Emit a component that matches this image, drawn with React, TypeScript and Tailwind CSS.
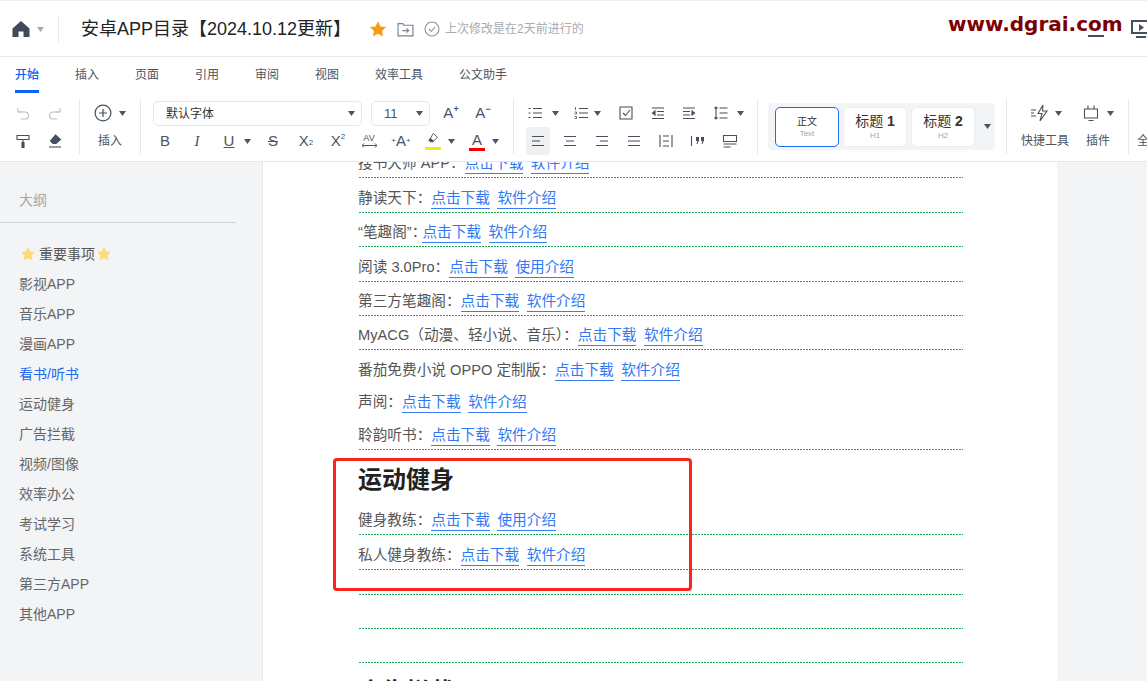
import React from "react";

const cjk = "font-['Liberation_Sans','Noto_Sans_CJK_SC',sans-serif]";
const dotted = "bg-[linear-gradient(90deg,#1aa85a_66%,transparent_66%)] bg-[length:3px_1px] bg-bottom bg-repeat-x";

const Arrow = ({ className = "" }: { className?: string }) => (
  <svg width="7" height="5" viewBox="0 0 7 5" className={`shrink-0 ${className}`}>
    <path d="M0 0h7L3.500 5z" fill="#4b5563" />
  </svg>
);

const Ico = ({ children, size = 16, vb = 16, color = "#454f5e" }: { children: React.ReactNode; size?: number; vb?: number; color?: string }) => (
  <svg width={size} height={size} viewBox={`0 0 ${vb} ${vb}`} fill="none" stroke={color} strokeWidth="1.1" className="shrink-0">
    {children}
  </svg>
);

const Cell = ({ w, children, className = "" }: { w: string; children?: React.ReactNode; className?: string }) => (
  <div className={`flex h-[28px] shrink-0 items-center justify-center ${w} ${className}`}>{children}</div>
);

const Lines = ({ kind }: { kind: "l" | "c" | "r" | "j" }) => {
  const d = {
    l: "M2 3.500h12M2 8h8M2 12.500h12",
    c: "M2 3.500h12M4 8h8M2 12.500h12",
    r: "M2 3.500h12M6 8h8M2 12.500h12",
    j: "M2 3.500h12M2 8h12M2 12.500h12",
  }[kind];
  return (
    <Ico>
      <path d={d} />
    </Ico>
  );
};

const tabs = ["开始", "插入", "页面", "引用", "审阅", "视图", "效率工具", "公文助手"];

const outline = ["影视APP", "音乐APP", "漫画APP", "看书/听书", "运动健身", "广告拦截", "视频/图像", "效率办公", "考试学习", "系统工具", "第三方APP", "其他APP"];

const Star = () => (
  <svg width="14" height="14" viewBox="0 0 24 24" fill="#fbdc7c" stroke="#fbdc7c" strokeWidth="3" strokeLinejoin="round">
    <path d="M12 3l2.800 5.900 6.400.8-4.700 4.400 1.200 6.400L12 17.400l-5.700 3.100 1.200-6.400-4.700-4.400 6.400-.8z" />
  </svg>
);

function Header() {
  return (
    <div className="flex h-[57px] items-center border-b border-t border-[#e5e7eb] border-t-[#eef0f6] pt-[1px]">
      <div className="ml-[12px] flex w-[46px] items-center">
        <svg width="18" height="18" viewBox="0 0 18 18">
          <path d="M9 1L17.500 8.500V17H11.500V11.500H6.500V17H0.500V8.500z" fill="#414a58" />
        </svg>
        <Arrow className="ml-[7px] opacity-50" />
      </div>
      <div className="h-[26px] w-px bg-[#e5e7eb]" />
      <div className="ml-[22px] w-[288px] text-[18px] whitespace-nowrap text-[#222]">安卓APP目录【2024.10.12更新】</div>
      <svg width="18" height="18" viewBox="0 0 24 24">
        <path d="M12 1.500l3.300 7 7.500.9-5.500 5.200 1.400 7.500L12 18.400l-6.700 3.700 1.400-7.500L1.200 9.400l7.500-.9z" fill="#fa9c0f" />
      </svg>
      <div className="ml-[10px]">
        <Ico size={17} color="#7a8290">
          <path d="M1 2.500h4.500l1 1.500H15v10H1z" />
          <path d="M5 9h6M9 7l2 2-2 2" />
        </Ico>
      </div>
      <div className="ml-[10px]">
        <Ico size={16} color="#8a919c">
          <circle cx="8" cy="8" r="7" />
          <path d="M5 8l2.300 2.300L11 6" />
        </Ico>
      </div>
      <div className="ml-[5px] text-[12px] whitespace-nowrap text-[#a7abb2]">上次修改是在2天前进行的</div>
      <div className="ml-auto flex items-center">
        <div className="mr-[27px] h-[15px] w-[16px] border-b-2 border-[#454f5e]" />
        <div className="-mr-[4px] flex flex-col items-center">
          <div className="flex h-[14px] w-[20px] items-center justify-center border-2 border-[#454f5e]">
            <svg width="5" height="7" viewBox="0 0 5 7"><path d="M0 0l5 3.500L0 7z" fill="#454f5e" /></svg>
          </div>
          <div className="mt-[2px] h-[2px] w-[10px] bg-[#454f5e]" />
        </div>
      </div>
    </div>
  );
}

function Tabs() {
  return (
    <div className="flex h-[39px] items-start gap-[36px] pl-[15px] pt-[11px] text-[12px] text-[#4b5563]">
      {tabs.map((t, i) => (
        <div key={t} className={i === 0 ? "h-[25px] border-b-[3px] border-[#0b62f6] leading-[15px] font-medium text-[#0b62f6]" : "leading-[15px]"}>
          {t}
        </div>
      ))}
    </div>
  );
}

function Toolbar() {
  const textCell = "text-[15px] text-[#4b5563]";
  return (
    <div className="flex h-[66px] border-b border-[#e5e7eb] pb-[7px] pt-[3px]">
      {/* undo, format painter */}
      <div className="w-[80px] shrink-0 border-r border-[#e5e7eb] pl-[7px]">
        <div className="flex">
          <Cell w="w-[32px]">
            <Ico color="#b9bdc4"><path d="M3 3v4h4" /><path d="M3.500 7H10a3.500 3.500 0 0 1 0 7H6" /></Ico>
          </Cell>
          <Cell w="w-[32px]">
            <Ico color="#b9bdc4"><path d="M13 3v4H9" /><path d="M12.500 7H6a3.500 3.500 0 0 0 0 7h4" /></Ico>
          </Cell>
        </div>
        <div className="flex">
          <Cell w="w-[32px]">
            <Ico><path d="M2 2.500h12v4H2z" /><path d="M8 6.500v3" /><path d="M7 9.500h2v5H7z" fill="#454f5e" /></Ico>
          </Cell>
          <Cell w="w-[32px]">
            <Ico><path d="M8.500 2L13.500 6.500 9 10.500H6L3.500 8z" fill="#454f5e" /><path d="M2 14h12" /></Ico>
          </Cell>
        </div>
      </div>
      {/* insert */}
      <div className="w-[61px] shrink-0 border-r border-[#e5e7eb]">
        <Cell w="w-full" className="gap-[7px]">
          <Ico size={18}><circle cx="8" cy="8" r="7" /><path d="M8 4.500v7M4.500 8h7" /></Ico>
          <Arrow />
        </Cell>
        <Cell w="w-full" className="text-[12px] text-[#4b5563]">插入</Cell>
      </div>
      {/* font */}
      <div className="w-[373px] shrink-0 border-r border-[#e5e7eb]">
        <div className="flex h-[28px] items-center">
          <div className="ml-[12px] flex h-[25px] w-[209px] shrink-0 items-center justify-between rounded-[5px] border border-[#e5e7eb] pl-[12px] pr-[6px] pt-[1px] text-[12px] text-[#333]">
            默认字体
            <Arrow />
          </div>
          <div className="ml-[9px] flex h-[25px] w-[59px] shrink-0 items-center justify-between rounded-[5px] border border-[#e5e7eb] pl-[12px] pr-[6px] pt-[1px] text-[13px] text-[#4b5563]">
            11
            <Arrow />
          </div>
          <Cell w="w-[34px]" className={`${textCell} ml-[4px]`}>A<sup className="text-[9px] font-bold">+</sup></Cell>
          <Cell w="w-[30px]" className={textCell}>A<sup className="text-[9px] font-bold">−</sup></Cell>
        </div>
        <div className="flex pl-[8px]">
          <Cell w="w-[32px]" className={textCell}>B</Cell>
          <Cell w="w-[32px]" className={textCell}><i className="font-['Liberation_Serif',serif]">I</i></Cell>
          <Cell w="w-[32px]" className={textCell}><u>U</u></Cell>
          <Cell w="w-[4px]"><Arrow /></Cell>
          <Cell w="w-[34px]" className={`${textCell} ml-[7px]`}><s>S</s></Cell>
          <Cell w="w-[32px]" className={textCell}>X<sub className="text-[8px]">2</sub></Cell>
          <Cell w="w-[32px]" className={textCell}>X<sup className="text-[8px]">2</sup></Cell>
          <Cell w="w-[30px]">
            <div className="flex flex-col items-center text-[9px] leading-[9px] font-medium text-[#4b5563]">
              AV
              <svg width="15" height="5" viewBox="0 0 15 5" fill="none" stroke="#4b5563"><path d="M0 2.500h15M2 .5L0 2.500l2 2M13 .5l2 2-2 2" /></svg>
            </div>
          </Cell>
          <Cell w="w-[34px]" className={textCell}><span className="text-[8px]">+</span>A<span className="text-[8px]">+</span></Cell>
          <Cell w="w-[30px]" className="flex-col">
            <Ico size={14}><path d="M8.500 1.500L13 6l-5 5H5L3.500 9.500z" /><path d="M3.500 9.500L5.500 7.500l3 3-.5.5H5z" fill="#454f5e" /></Ico>
            <div className="mt-[1px] h-[3px] w-[16px] bg-[#f5ea00]" />
          </Cell>
          <Cell w="w-[6px]"><Arrow /></Cell>
          <Cell w="w-[34px]" className="ml-[6px] flex-col">
            <span className="text-[15px] leading-[15px] text-[#4b5563]">A</span>
            <div className="mt-[1px] h-[3px] w-[16px] bg-[#f50000]" />
          </Cell>
          <Cell w="w-[2px]"><Arrow /></Cell>
        </div>
      </div>
      {/* paragraph */}
      <div className="w-[244px] shrink-0 border-r border-[#e5e7eb]">
        <div className="flex pl-[8px]">
          <Cell w="w-[26px]">
            <Ico><path d="M6 3.500h9M6 8h9M6 12.500h9" /><path d="M1.500 3.500h2M1.500 8h2M1.500 12.500h2" /></Ico>
          </Cell>
          <Cell w="w-[14px]"><Arrow /></Cell>
          <Cell w="w-[26px]" className="ml-[6px]">
            <Ico><path d="M6 3.500h9M6 8h9M6 12.500h9" /><path d="M2.500 2v3M1.500 7h2v2h-2M1.500 11.500h2v2h-2" strokeWidth="0.8" /></Ico>
          </Cell>
          <Cell w="w-[6px]"><Arrow /></Cell>
          <Cell w="w-[32px]" className="ml-[10px]">
            <Ico><path d="M2 2h12v12H2z" /><path d="M5 8l2.500 2.500L12 5" /></Ico>
          </Cell>
          <Cell w="w-[32px]">
            <Ico><path d="M2 3h12M7 6.500h7M7 10h7M2 13.500h12" /><path d="M5 6L2.500 8 5 10z" fill="#454f5e" /></Ico>
          </Cell>
          <Cell w="w-[30px]">
            <Ico><path d="M2 3h12M2 6.500h7M2 10h7M2 13.500h12" /><path d="M11 6l2.500 2L11 10z" fill="#454f5e" /></Ico>
          </Cell>
          <Cell w="w-[34px]">
            <Ico><path d="M6.500 3h8M6.500 8h8M6.500 13h8M3 2v12M1.500 3.500L3 2l1.500 1.500M1.500 12.500L3 14l1.500-1.500" /></Ico>
          </Cell>
          <Cell w="w-[4px]"><Arrow /></Cell>
        </div>
        <div className="flex gap-[8px] pl-[12px]">
          <Cell w="w-[24px]" className="rounded-[3px] bg-[#eff0f2]"><Lines kind="l" /></Cell>
          <Cell w="w-[24px]"><Lines kind="c" /></Cell>
          <Cell w="w-[24px]"><Lines kind="r" /></Cell>
          <Cell w="w-[24px]"><Lines kind="j" /></Cell>
          <Cell w="w-[24px]">
            <Ico><path d="M2 2v12M14 2v12M5 3h6M5 8h6M5 13h6" /></Ico>
          </Cell>
          <Cell w="w-[24px]">
            <Ico><path d="M1.500 3v10" /><path d="M6 4h3v3.500L7.500 11H6.500L7.500 8H6zM11 4h3v3.500L12.500 11h-1l1-3H11z" fill="#454f5e" stroke="none" /></Ico>
          </Cell>
          <Cell w="w-[24px]">
            <Ico><path d="M1.500 2.500h13v6h-13zM1.500 11h13M1.500 14h7" /></Ico>
          </Cell>
        </div>
      </div>
      {/* styles */}
      <div className="w-[249px] shrink-0 border-r border-[#e5e7eb] pl-[10px]">
        <div className="mt-[4px] flex h-[47px] w-[227px] items-center gap-[4px] rounded-[4px] bg-[#f3f4f6] pl-[7px]">
          <div className="flex h-[40px] w-[64px] flex-col items-center justify-center rounded-[5px] border border-[#1a6cf5] bg-white text-[10px] leading-[13px] text-[#333]">
            正文
            <span className="text-[8px] leading-[11px] text-[#a0a4ab]">Text</span>
          </div>
          <div className="flex h-[40px] w-[64px] flex-col items-center justify-center rounded-[5px] border border-[#eceef1] bg-white text-[14px] leading-[17px] text-[#333]">
            <span>标题 <b>1</b></span>
            <span className="text-[8px] leading-[11px] text-[#a0a4ab]">H1</span>
          </div>
          <div className="flex h-[40px] w-[64px] flex-col items-center justify-center rounded-[5px] border border-[#eceef1] bg-white text-[14px] leading-[17px] text-[#333]">
            <span>标题 <b>2</b></span>
            <span className="text-[8px] leading-[11px] text-[#a0a4ab]">H2</span>
          </div>
          <Arrow className="ml-[5px]" />
        </div>
      </div>
      {/* tools */}
      <div className="w-[122px] shrink-0 border-r border-[#e5e7eb]">
        <div className="flex pl-[22px]">
          <Cell w="w-[22px]">
            <Ico size={20} vb={20}><path d="M1 7h5M1 10h3M1 13h5" /><path d="M13 2L8 10.500h4L10 18l7-10h-4.500z" /></Ico>
          </Cell>
          <Cell w="w-[14px]"><Arrow /></Cell>
          <Cell w="w-[20px]" className="ml-[16px]">
            <Ico size={18} vb={18}><path d="M2.500 5h13v9h-13zM6 5V1.500M12 5V1.500M6.500 16.500h5" /></Ico>
          </Cell>
          <Cell w="w-[14px]" className="ml-[2px]"><Arrow /></Cell>
        </div>
        <div className="flex h-[28px] items-center pl-[14px] text-[12px] text-[#4b5563]">
          <span>快捷工具</span>
          <span className="ml-[17px]">插件</span>
        </div>
      </div>
      <div className="shrink-0">
        <div className="h-[28px]" />
        <div className="flex h-[28px] items-center pl-[8px] text-[12px] text-[#4b5563]">全</div>
      </div>
    </div>
  );
}

function Sidebar() {
  return (
    <div className="h-full w-[263px] shrink-0 border-r border-[#e5e7eb] bg-[#f3f4f6] pt-[28px] text-[#666]">
      <div className="flex h-[33px] w-[236px] items-start border-b border-[#cfd1d4] pl-[19px] text-[14px] leading-[20px] text-[#a9a9a9]">大纲</div>
      <div className="pt-[16px] text-[14px] leading-[30px]">
        <div className="flex h-[30px] items-center pl-[21px] text-[#555]">
          <Star />
          <span className="ml-[4px]">重要事项</span>
          <span className="ml-[2px] flex"><Star /></span>
        </div>
        {outline.map((o) => (
          <div key={o} className={`h-[30px] pl-[19px] ${o === "看书/听书" ? "text-[#2468f2]" : ""}`}>
            {o}
          </div>
        ))}
      </div>
    </div>
  );
}

const A = ({ children, className = "" }: { children: React.ReactNode; className?: string }) => (
  <span className={`border-b-[1.500px] border-[#3b7cf6] leading-[19px] text-[#2f78f6] ${className}`}>{children}</span>
);

type RowData = { label: string; second: string; h: string; line?: boolean; labelClass?: string };

const rows: RowData[] = [
  { label: "搜书大师 APP：", second: "软件介绍", h: "h-[34px] -mt-[18px]", line: true },
  { label: "静读天下：", second: "软件介绍", h: "h-[35px]", line: true },
  { label: "“笔趣阁”：", second: "软件介绍", h: "h-[34px]", line: true, labelClass: "-mr-[4px]" },
  { label: "阅读 3.0Pro：", second: "使用介绍", h: "h-[35px]", line: true },
  { label: "第三方笔趣阁：", second: "软件介绍", h: "h-[34px]", line: true },
  { label: "MyACG（动漫、轻小说、音乐）：", second: "软件介绍", h: "h-[34px]", line: true },
  { label: "番茄免费小说 OPPO 定制版：", second: "软件介绍", h: "h-[35px]" },
  { label: "声阅：", second: "软件介绍", h: "h-[32px]" },
  { label: "聆韵听书：", second: "软件介绍", h: "h-[33px]", line: true },
];

const Row = ({ r }: { r: RowData }) => (
  <div className={`flex items-end pb-[4px] ${r.h} ${r.line ? dotted : ""}`}>
    <span className={`leading-[22px] ${r.labelClass ?? ""}`}>{r.label}</span>
    <A>点击下载</A>
    <A className="ml-[7.500px]">{r.second}</A>
  </div>
);

function Page() {
  return (
    <div className="h-full w-[794px] shrink-0 overflow-hidden bg-white pl-[95px] pr-[94px] text-[14.670px] text-[#555]">
      {rows.map((r) => (
        <Row key={r.label} r={r} />
      ))}
      <div className="flex h-[50px] items-start pt-[15px] text-[24px] leading-[30px] font-bold text-[#222]">运动健身</div>
      <Row r={{ label: "健身教练：", second: "使用介绍", h: "h-[35px]", line: true }} />
      <Row r={{ label: "私人健身教练：", second: "软件介绍", h: "h-[35px]", line: true }} />
      <div className={`h-[25px] ${dotted}`} />
      <div className={`h-[34px] ${dotted}`} />
      <div className={`h-[34px] ${dotted}`} />
      <div className="pt-[14px] text-[24px] leading-[30px] font-bold text-[#222]">广告拦截</div>
    </div>
  );
}

export default function App() {
  return (
    <div className={`relative h-[681px] w-[1147px] overflow-hidden bg-white ${cjk}`}>
      <Header />
      <Tabs />
      <Toolbar />
      <div className="flex h-[519px] bg-[#f3f4f6]">
        <Sidebar />
        <Page />
      </div>
      {/* annotations burnt into the screenshot */}
      <div className="absolute left-[333px] top-[458px] h-[133px] w-[359px] rounded-[4px] border-[3px] border-[#fb2418]" />
      <div className="absolute left-[948px] top-[11px] font-['DejaVu_Sans',sans-serif] text-[20px] leading-[26px] font-bold text-[#7c0000]">
        www.dgrai.com
      </div>
    </div>
  );
}
